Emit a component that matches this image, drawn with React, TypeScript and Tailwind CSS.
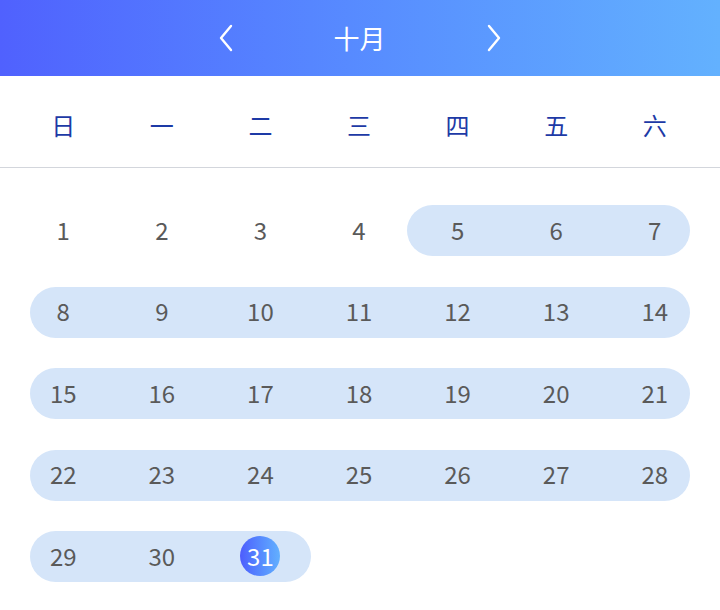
import React from "react";

const weekdays = ["日", "一", "二", "三", "四", "五", "六"];

// each week with its highlight span
const weeks = [
  { days: [1, 2, 3, 4, 5, 6, 7], bar: "col-start-5 col-end-8 ml-[-1px] mr-[14px]" },
  { days: [8, 9, 10, 11, 12, 13, 14], bar: "col-start-1 col-end-8 ml-[16px] mr-[14px]" },
  { days: [15, 16, 17, 18, 19, 20, 21], bar: "col-start-1 col-end-8 ml-[16px] mr-[14px]" },
  { days: [22, 23, 24, 25, 26, 27, 28], bar: "col-start-1 col-end-8 ml-[16px] mr-[14px]" },
  { days: [29, 30, 31], bar: "col-start-1 col-end-4 ml-[16px] mr-[-1px]" },
];

const colStart = [
  "col-start-1",
  "col-start-2",
  "col-start-3",
  "col-start-4",
  "col-start-5",
  "col-start-6",
  "col-start-7",
];

function Chevron({ dir }: { dir: "left" | "right" }) {
  return (
    <svg width="14" height="28" viewBox="0 0 14 28" fill="none">
      <polyline
        points={dir === "left" ? "12,2 2,14 12,26" : "2,2 12,14 2,26"}
        stroke="white"
        strokeWidth="2.4"
        strokeLinecap="round"
        strokeLinejoin="round"
      />
    </svg>
  );
}

export default function App() {
  return (
    <div
      className="w-[720px] h-[610px] bg-white overflow-hidden"
      style={{ fontFamily: '"Noto Sans CJK SC", "Noto Sans", sans-serif' }}
    >
      {/* month header */}
      <div className="h-[76px] bg-gradient-to-r from-[#5061fe] to-[#63b1fe] flex items-center justify-center">
        <div className="flex items-center ml-[-1px]">
          <Chevron dir="left" />
          <div className="w-[254px] text-center text-white text-[26px] leading-none">十月</div>
          <Chevron dir="right" />
        </div>
      </div>

      {/* weekday row */}
      <div className="h-[92px] grid grid-cols-7 pl-[14px] pr-[16px] items-center border-b border-[#d3d6dc]">
        {weekdays.map((w) => (
          <div key={w} className="text-center text-[24px] leading-none text-[#1d3aa6] pt-[6px]">
            {w}
          </div>
        ))}
      </div>

      {/* dates */}
      <div className="pl-[14px] pr-[16px] pt-[37px] flex flex-col gap-y-[30.5px]">
        {weeks.map((wk, i) => (
          <div key={i} className="grid grid-cols-7 h-[51px]">
            <div className={"row-start-1 rounded-full bg-[#d5e5f9] " + wk.bar} />
            {wk.days.map((d, j) => (
              <div
                key={d}
                className={"row-start-1 flex items-center justify-center pb-[2px] " + colStart[j]}
              >
                {d === 31 ? (
                  <span className="w-[40px] h-[40px] rounded-full bg-gradient-to-r from-[#4e5cfd] to-[#63b0fe] text-white flex items-center justify-center text-[24px] leading-none">
                    {d}
                  </span>
                ) : (
                  <span className="text-[24px] leading-none text-[#5a5a5a]">{d}</span>
                )}
              </div>
            ))}
          </div>
        ))}
      </div>
    </div>
  );
}
